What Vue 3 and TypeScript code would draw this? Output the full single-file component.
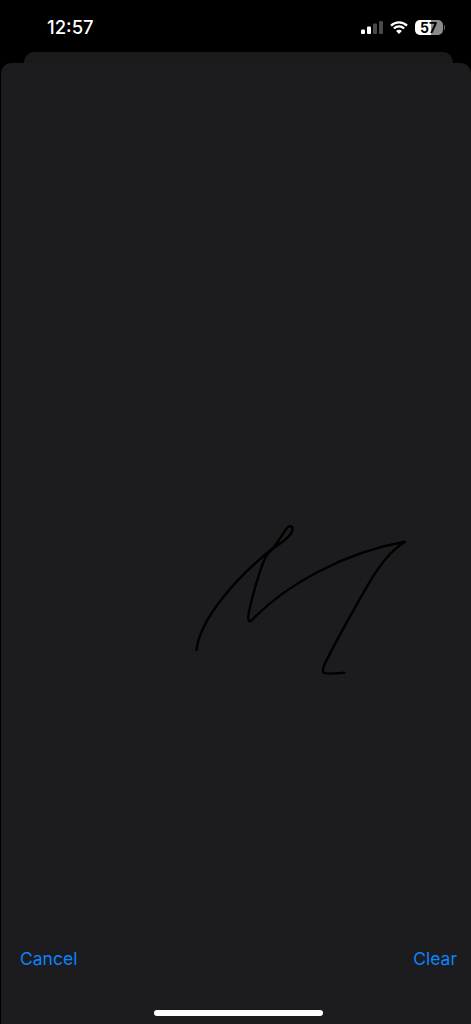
<script setup lang="ts">
const signature =
  'M196.5 650 C200 618 238 576 271.7 549.3 C277 545 282 534 287 528 C289 525.5 292.5 525.5 292.5 529 C292.5 534 284 541 278 545 C272 549 268 552 265 558.3 C259 572 250 604 248.3 616 C248 620 249 622 251 621 C285 585 345 552 405 541.7 C396 547 385 558 375 573.3 C365 589 337 639 325 663.3 C323 668 322.5 671 323.5 672.5 C325 674.5 335 673.5 344.3 672.7'
</script>

<template>
  <div class="screen">
    <header class="status">
      <span class="time">12:57</span>
      <div class="indicators">
        <svg class="signal" width="22" height="13" viewBox="0 0 22 13">
          <rect x="0" y="8.5" width="4" height="4.5" rx="1" fill="#fff" />
          <rect x="6" y="5.5" width="4" height="7.5" rx="1" fill="#fff" />
          <rect x="12" y="2.5" width="4" height="10.5" rx="1" fill="#4a4a4a" />
          <rect x="18" y="0" width="4" height="13" rx="1" fill="#4a4a4a" />
        </svg>
        <svg class="wifi" width="18" height="13" viewBox="0 0 18 13">
          <path d="M1 4.6 A11.6 11.6 0 0 1 17 4.6" fill="none" stroke="#fff" stroke-width="2.3" />
          <path d="M3.9 7.5 A7.4 7.4 0 0 1 14.1 7.5" fill="none" stroke="#fff" stroke-width="2.3" />
          <path d="M6.1 9.9 A4 4 0 0 1 11.9 9.9 L9 13 Z" fill="#fff" />
        </svg>
        <div class="battery">
          <div class="battery-body">57</div>
          <span class="battery-cap"></span>
        </div>
      </div>
    </header>

    <div class="back-sheet"></div>

    <main class="sheet">
      <div class="canvas">
        <svg class="signature" width="471" height="1024" viewBox="0 0 471 1024">
          <path :d="signature" fill="none" stroke="#000" stroke-width="2.4" stroke-linecap="round" stroke-linejoin="round" />
        </svg>
      </div>
      <footer class="actions">
        <span class="action">Cancel</span>
        <span class="action">Clear</span>
      </footer>
      <div class="home-row">
        <span class="home-bar"></span>
      </div>
    </main>
  </div>
</template>

<style>
html,
body {
  margin: 0;
  background: #000;
}
</style>

<style scoped>
.screen {
  width: 471px;
  height: 1024px;
  display: flex;
  flex-direction: column;
  overflow: hidden;
  background: #000;
  font-family: Inter, "Liberation Sans", sans-serif;
}
.status {
  height: 52px;
  flex: none;
  display: flex;
  align-items: center;
  justify-content: space-between;
  box-sizing: border-box;
  padding: 2px 26px 0 47px;
}
.time {
  color: #fff;
  font-size: 18.5px;
  font-weight: 500;
}
.indicators {
  display: flex;
  align-items: center;
  gap: 7px;
}
.battery {
  display: flex;
  align-items: center;
  gap: 1px;
}
.battery-body {
  width: 28px;
  height: 15px;
  border-radius: 5px;
  background: linear-gradient(90deg, #fff 0 57%, #8a8a8a 57% 100%);
  color: #000;
  font-size: 14px;
  font-weight: 700;
  line-height: 15px;
  text-align: center;
}
.battery-cap {
  width: 1.5px;
  height: 5px;
  background: #666;
  border-radius: 0 1px 1px 0;
}
.back-sheet {
  flex: none;
  height: 24px;
  margin: 0 18px -13px 24px;
  background: #1a1a1b;
  border-radius: 10px 10px 0 0;
}
.sheet {
  flex: 1;
  position: relative;
  display: flex;
  flex-direction: column;
  margin-left: 1px;
  background: #1c1c1e;
  border-radius: 10px 10px 0 0;
}
.canvas {
  flex: 1;
  position: relative;
  overflow: hidden;
}
.signature {
  position: absolute;
  left: -1px;
  top: -63px;
}
.actions {
  flex: none;
  display: flex;
  justify-content: space-between;
  padding: 0 14px 0 19px;
  height: 24px;
  align-items: center;
}
.action {
  color: #0a84ff;
  font-size: 17.5px;
}
.home-row {
  flex: none;
  height: 54px;
  box-sizing: border-box;
  padding: 0 0 8px 6px;
  display: flex;
  align-items: flex-end;
  justify-content: center;
  margin-left: -1px;
}
.home-bar {
  width: 169px;
  height: 6px;
  border-radius: 3px;
  background: #fff;
}
</style>
